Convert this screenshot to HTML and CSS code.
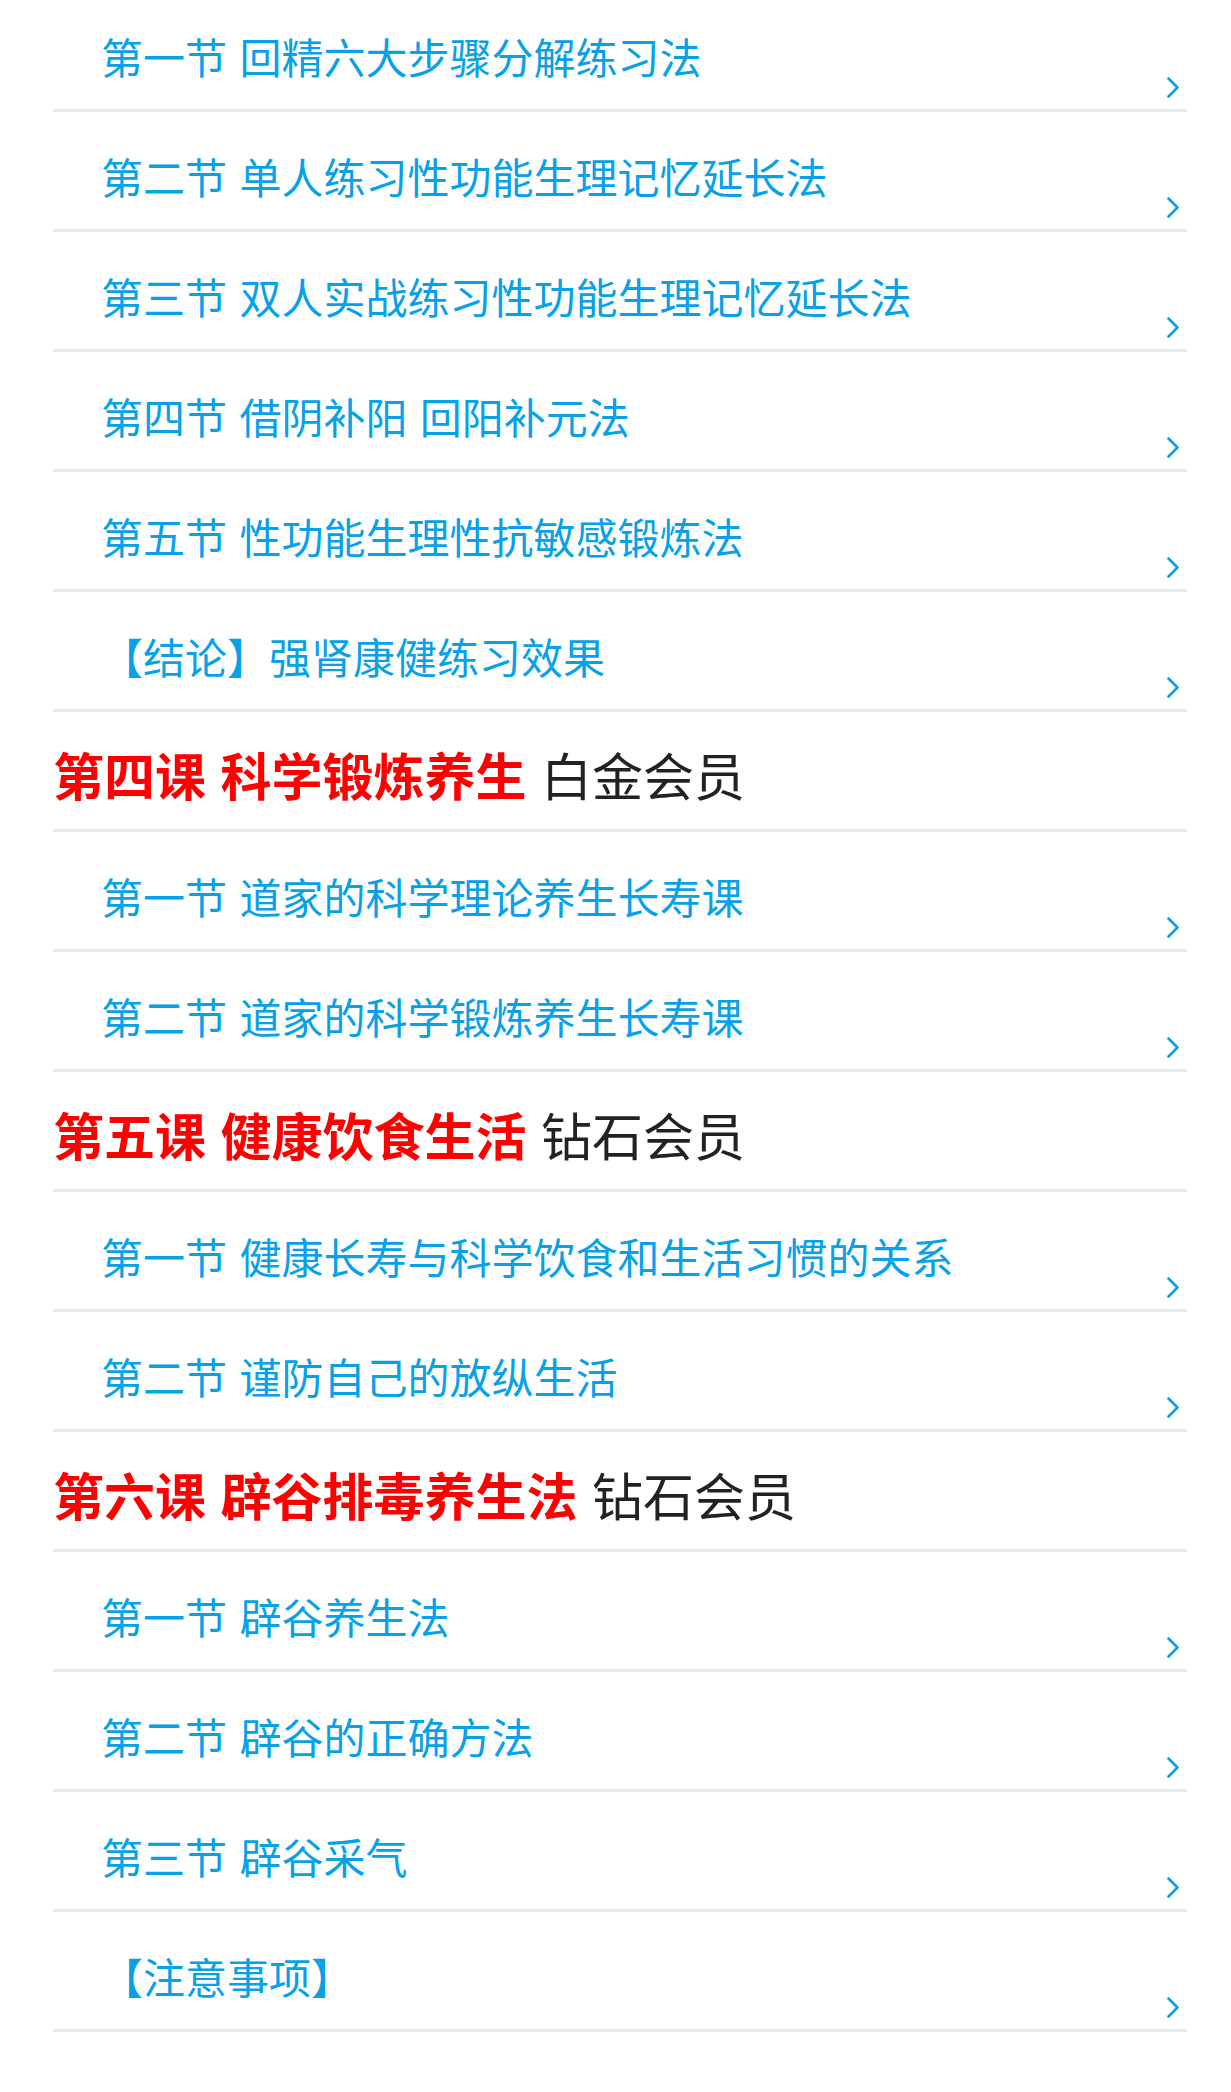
FILE: index.html
```html
<!DOCTYPE html>
<html lang="zh-CN">
<head>
<meta charset="utf-8">
<title>课程目录</title>
<link rel="stylesheet" href="styles.css">
</head>
<body>
<ul class="list">
  <li class="row sub"><span class="label">第一节 回精六大步骤分解练习法</span><svg class="chev" viewBox="0 0 12 21"><path d="M1.5 1.5 L10.5 10.5 L1.5 19.5"/></svg></li>
  <li class="row sub"><span class="label">第二节 单人练习性功能生理记忆延长法</span><svg class="chev" viewBox="0 0 12 21"><path d="M1.5 1.5 L10.5 10.5 L1.5 19.5"/></svg></li>
  <li class="row sub"><span class="label">第三节 双人实战练习性功能生理记忆延长法</span><svg class="chev" viewBox="0 0 12 21"><path d="M1.5 1.5 L10.5 10.5 L1.5 19.5"/></svg></li>
  <li class="row sub"><span class="label">第四节 借阴补阳 回阳补元法</span><svg class="chev" viewBox="0 0 12 21"><path d="M1.5 1.5 L10.5 10.5 L1.5 19.5"/></svg></li>
  <li class="row sub"><span class="label">第五节 性功能生理性抗敏感锻炼法</span><svg class="chev" viewBox="0 0 12 21"><path d="M1.5 1.5 L10.5 10.5 L1.5 19.5"/></svg></li>
  <li class="row sub"><span class="label">【结论】强肾康健练习效果</span><svg class="chev" viewBox="0 0 12 21"><path d="M1.5 1.5 L10.5 10.5 L1.5 19.5"/></svg></li>
  <li class="row head"><span class="heading"><span class="title">第四课 科学锻炼养生</span> <span class="level">白金会员</span></span></li>
  <li class="row sub"><span class="label">第一节 道家的科学理论养生长寿课</span><svg class="chev" viewBox="0 0 12 21"><path d="M1.5 1.5 L10.5 10.5 L1.5 19.5"/></svg></li>
  <li class="row sub"><span class="label">第二节 道家的科学锻炼养生长寿课</span><svg class="chev" viewBox="0 0 12 21"><path d="M1.5 1.5 L10.5 10.5 L1.5 19.5"/></svg></li>
  <li class="row head"><span class="heading"><span class="title">第五课 健康饮食生活</span> <span class="level">钻石会员</span></span></li>
  <li class="row sub"><span class="label">第一节 健康长寿与科学饮食和生活习惯的关系</span><svg class="chev" viewBox="0 0 12 21"><path d="M1.5 1.5 L10.5 10.5 L1.5 19.5"/></svg></li>
  <li class="row sub"><span class="label">第二节 谨防自己的放纵生活</span><svg class="chev" viewBox="0 0 12 21"><path d="M1.5 1.5 L10.5 10.5 L1.5 19.5"/></svg></li>
  <li class="row head"><span class="heading"><span class="title">第六课 辟谷排毒养生法</span> <span class="level">钻石会员</span></span></li>
  <li class="row sub"><span class="label">第一节 辟谷养生法</span><svg class="chev" viewBox="0 0 12 21"><path d="M1.5 1.5 L10.5 10.5 L1.5 19.5"/></svg></li>
  <li class="row sub"><span class="label">第二节 辟谷的正确方法</span><svg class="chev" viewBox="0 0 12 21"><path d="M1.5 1.5 L10.5 10.5 L1.5 19.5"/></svg></li>
  <li class="row sub"><span class="label">第三节 辟谷采气</span><svg class="chev" viewBox="0 0 12 21"><path d="M1.5 1.5 L10.5 10.5 L1.5 19.5"/></svg></li>
  <li class="row sub"><span class="label">【注意事项】</span><svg class="chev" viewBox="0 0 12 21"><path d="M1.5 1.5 L10.5 10.5 L1.5 19.5"/></svg></li>
</ul>
</body>
</html>
```

FILE: styles.css
```css
html, body {
  margin: 0;
  padding: 0;
  background: #ffffff;
}

body {
  font-family: "Noto Sans CJK SC", "Noto Sans", sans-serif;
}

.list {
  list-style: none;
  margin: -8px 44px 0 53px;
  padding: 0;
}

.row {
  display: flex;
  align-items: flex-start;
  height: 117px;
  border-bottom: 3px solid #ececec;
}

.sub {
  padding-left: 48px;
}

.label {
  margin-top: 43px;
  font-size: 42px;
  line-height: 42px;
  color: #07a1e8;
  white-space: nowrap;
  word-spacing: 3px;
}

.chev {
  margin-left: auto;
  align-self: flex-end;
  width: 12px;
  height: 21px;
  margin-right: 8px;
  margin-bottom: 11px;
  fill: none;
  stroke: #07a1e8;
  stroke-width: 2.6;
  stroke-linecap: round;
  stroke-linejoin: round;
}

.heading {
  margin-top: 37px;
  font-size: 51px;
  line-height: 51px;
  white-space: pre;
  word-spacing: 3px;
}

.title {
  color: #ff0000;
  font-weight: 700;
}

.level {
  color: #222222;
  font-weight: 400;
}
```
